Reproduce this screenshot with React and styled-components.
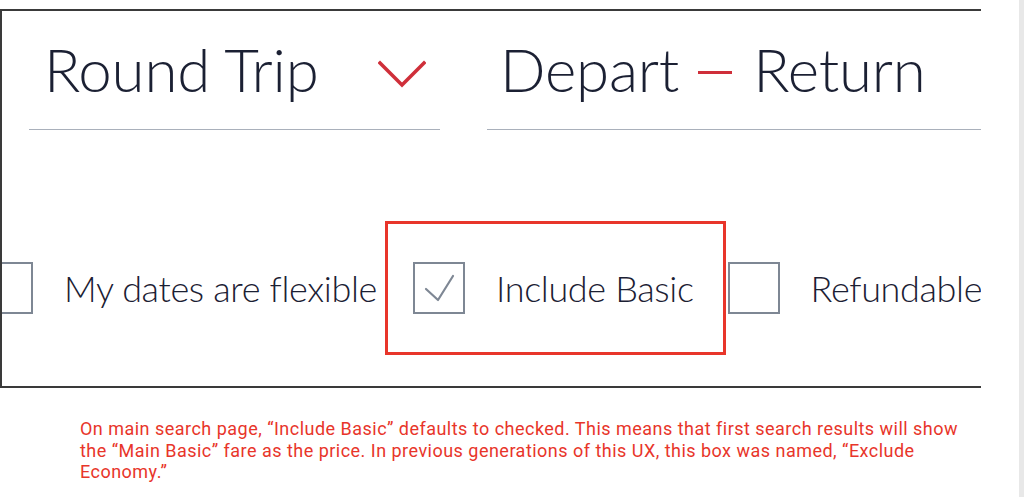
import React from 'react';
import styled, { createGlobalStyle } from 'styled-components';

const COLORS = {
  ink: '#1b2033',
  rule: '#a9b0bb',
  frame: '#3a3a3a',
  box: '#7e8794',
  delta: '#cf2f3a',
  note: '#e8352a',
};

const GlobalStyle = createGlobalStyle`
  html, body {
    margin: 0;
    padding: 0;
    background: #fff;
  }
  body {
    font-family: Lato, "Open Sans", sans-serif;
    color: ${COLORS.ink};
  }
`;

const Chevron = () => (
  <svg width="48" height="28" viewBox="0 0 48 28" fill="none">
    <path
      d="M2 3 L24 25 L46 3"
      stroke={COLORS.delta}
      strokeWidth="3.6"
      strokeLinecap="square"
    />
  </svg>
);

const Check = () => (
  <svg width="32" height="28" viewBox="0 0 32 28" fill="none">
    <path
      d="M3 15 L15 26 L30 2"
      stroke={COLORS.box}
      strokeWidth="2.2"
      strokeLinecap="round"
      strokeLinejoin="round"
    />
  </svg>
);

const CheckOption = ({ label, checked, highlighted }) => {
  const content = (
    <Option>
      <Box>{checked && <Check />}</Box>
      <Label>{label}</Label>
    </Option>
  );
  return highlighted ? <Highlight>{content}</Highlight> : content;
};

const App = () => {
  return (
    <>
      <GlobalStyle />
      <Page>
        <Main>
          <Frame>
            <Fields>
              <Field $width={411}>
                <FieldText $indent={15}>Round Trip</FieldText>
                <ChevronWrap>
                  <Chevron />
                </ChevronWrap>
              </Field>
              <Field $width={494}>
                <FieldText $indent={13}>
                  Depart <Dash /> Return
                </FieldText>
              </Field>
            </Fields>
            <Options>
              <CheckOption label="My dates are flexible" />
              <CheckOption label="Include Basic" checked highlighted />
              <CheckOption label="Refundable" />
            </Options>
          </Frame>
          <Note>
            On main search page, “Include Basic” defaults to checked. This means that first search results will show
            <br />
            the “Main Basic” fare as the price. In previous generations of this UX, this box was named, “Exclude
            <br />
            Economy.”
          </Note>
        </Main>
        <ScrollTrack />
      </Page>
    </>
  );
};

const Page = styled.div`
  display: flex;
  width: 1024px;
  height: 497px;
  overflow: hidden;
`;

const Main = styled.div`
  flex: 1;
  padding-top: 9px;
`;

const ScrollTrack = styled.div`
  width: 5px;
  background: #e8e8e8;
`;

const Frame = styled.div`
  width: 979px;
  height: 375px;
  border-top: 2px solid ${COLORS.frame};
  border-bottom: 2px solid ${COLORS.frame};
  border-left: 2px solid ${COLORS.frame};
  overflow: hidden;
`;

const Fields = styled.div`
  display: flex;
  gap: 47px;
  padding: 0 0 0 27px;
`;

const Field = styled.div`
  width: ${p => p.$width}px;
  height: 118px;
  display: flex;
  align-items: center;
  border-bottom: 1.5px solid ${COLORS.rule};
`;

const FieldText = styled.div`
  font-family: Lato, sans-serif;
  font-weight: 300;
  font-size: 60px;
  letter-spacing: -0.2px;
  line-height: 1;
  padding-left: ${p => p.$indent}px;
  margin-top: -3px;
  white-space: nowrap;
`;

const Dash = styled.span`
  display: inline-block;
  width: 34px;
  height: 2.5px;
  background: ${COLORS.delta};
  vertical-align: 0.3em;
  margin: 0 5px 0 3px;
`;

const ChevronWrap = styled.div`
  margin-left: 59px;
  margin-top: 8px;
  display: flex;
`;

const Options = styled.div`
  display: flex;
  align-items: center;
  gap: 36px;
  margin: 132px 0 0 -21px;
`;

const Option = styled.div`
  display: flex;
  align-items: center;
  gap: 31px;
  flex-shrink: 0;
`;

const Box = styled.div`
  width: 52px;
  height: 52px;
  box-sizing: border-box;
  border: 2px solid ${COLORS.box};
  display: flex;
  align-items: center;
  justify-content: center;
  flex-shrink: 0;
`;

const Label = styled.span`
  font-family: Lato, sans-serif;
  font-weight: 300;
  font-size: 36px;
  letter-spacing: -0.35px;
  white-space: nowrap;
`;

const Highlight = styled.div`
  display: flex;
  align-items: center;
  box-sizing: border-box;
  height: 134px;
  margin: -41px -34px -41px -28px;
  padding: 0 29px 0 25px;
  border: 3px solid ${COLORS.note};
`;

const Note = styled.p`
  margin: 30px 0 0 80px;
  font-family: Roboto, sans-serif;
  font-size: 18px;
  line-height: 21.5px;
  letter-spacing: 0.48px;
  color: ${COLORS.note};
  white-space: nowrap;
`;

export default App;
